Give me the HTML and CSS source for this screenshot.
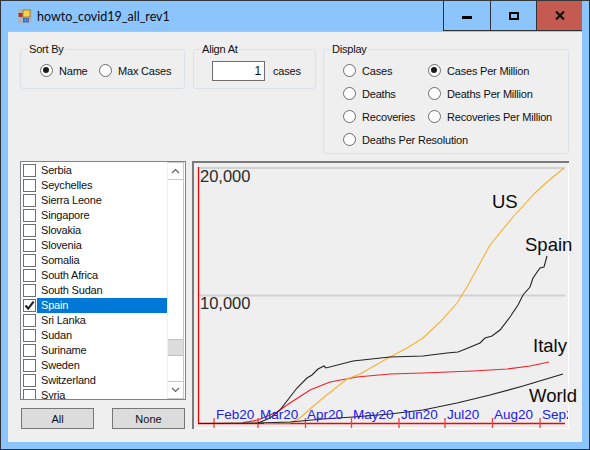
FILE: index.html
```html
<!DOCTYPE html>
<html lang="en">
<head>
<meta charset="utf-8">
<title>howto_covid19_all_rev1</title>
<link rel="stylesheet" href="styles.css">
</head>
<body>
<div class="window">
  <header class="titlebar">
    <svg class="app-icon" viewBox="0 0 14 14" width="14" height="14">
      <rect x="0" y="0" width="14" height="14" fill="#a9b4c4"/>
      <rect x="5" y="1" width="7" height="7" fill="#f8d24a" stroke="#a8802a"/>
      <rect x="1" y="4.5" width="3" height="3" fill="#e02a20" stroke="#8a2018" stroke-width=".7"/>
      <rect x="5.5" y="9.5" width="5" height="3.5" fill="#4a86e0" stroke="#2c5aa8" stroke-width=".7"/>
    </svg>
    <span class="title">howto_covid19_all_rev1</span>
    <div class="caption-buttons">
      <div class="cap cap-min"><span class="min-glyph"></span></div>
      <div class="cap cap-max"><span class="max-glyph"></span></div>
      <div class="cap cap-close">
        <svg viewBox="0 0 10 9" width="10" height="9"><path d="M1 .5 9 8.5M9 .5 1 8.5" stroke="#111" stroke-width="2.2" fill="none"/></svg>
      </div>
    </div>
  </header>
  <main class="client">
    <div class="top-row">
      <fieldset class="group group-sort">
        <legend>Sort By</legend>
        <div class="radio-row">
          <label class="radio radio-name"><span class="dot on"></span>Name</label>
          <label class="radio"><span class="dot"></span>Max Cases</label>
        </div>
      </fieldset>
      <fieldset class="group group-align">
        <legend>Align At</legend>
        <div class="align-row">
          <span class="num-input">1</span>
          <span>cases</span>
        </div>
      </fieldset>
      <fieldset class="group group-display">
        <legend>Display</legend>
        <div class="display-grid">
          <label class="radio"><span class="dot"></span>Cases</label>
          <label class="radio"><span class="dot on"></span>Cases Per Million</label>
          <label class="radio"><span class="dot"></span>Deaths</label>
          <label class="radio"><span class="dot"></span>Deaths Per Million</label>
          <label class="radio"><span class="dot"></span>Recoveries</label>
          <label class="radio"><span class="dot"></span>Recoveries Per Million</label>
          <label class="radio"><span class="dot"></span>Deaths Per Resolution</label>
        </div>
      </fieldset>
    </div>
    <div class="bottom-row">
      <div class="left-col">
        <div class="listbox">
          <ul class="items">
            <li class="item"><span class="check"></span>Serbia</li>
            <li class="item"><span class="check"></span>Seychelles</li>
            <li class="item"><span class="check"></span>Sierra Leone</li>
            <li class="item"><span class="check"></span>Singapore</li>
            <li class="item"><span class="check"></span>Slovakia</li>
            <li class="item"><span class="check"></span>Slovenia</li>
            <li class="item"><span class="check"></span>Somalia</li>
            <li class="item"><span class="check"></span>South Africa</li>
            <li class="item"><span class="check"></span>South Sudan</li>
            <li class="item selected"><span class="check"><svg viewBox="0 0 11 11" width="11" height="11"><path d="M1.5 5.500 4.200 8.600 9.600 1.600" fill="none" stroke="#222" stroke-width="2.2"/></svg></span><span class="item-text">Spain</span></li>
            <li class="item"><span class="check"></span>Sri Lanka</li>
            <li class="item"><span class="check"></span>Sudan</li>
            <li class="item"><span class="check"></span>Suriname</li>
            <li class="item"><span class="check"></span>Sweden</li>
            <li class="item"><span class="check"></span>Switzerland</li>
            <li class="item"><span class="check"></span>Syria</li>
          </ul>
          <div class="scrollbar">
            <div class="sb-btn"><svg viewBox="0 0 9 6" width="9" height="6"><path d="M1 5 4.500 1.500 8 5" fill="none" stroke="#606060" stroke-width="1.2"/></svg></div>
            <div class="sb-track"><div class="sb-thumb"></div></div>
            <div class="sb-btn"><svg viewBox="0 0 9 6" width="9" height="6"><path d="M1 1 4.500 4.500 8 1" fill="none" stroke="#606060" stroke-width="1.2"/></svg></div>
          </div>
        </div>
        <div class="buttons">
          <button class="btn" type="button">All</button>
          <button class="btn" type="button">None</button>
        </div>
      </div>
      <div class="plot">
        <svg class="chart" viewBox="192 161 377 268" width="377" height="268">
          <defs><clipPath id="plotclip"><rect x="192" y="161" width="376" height="268"/></clipPath></defs>
          <line class="grid" x1="198" y1="168" x2="565" y2="168"/>
          <line class="grid" x1="198" y1="295.5" x2="565" y2="295.5"/>
          <path class="axis" d="M198.500 167V423.500H565"/>
          <path class="ticks" d="M214 418V428M258 418V428M305.500 418V428M351.500 418V428M399 418V428M445 418V428M492.500 418V428M540 418V428"/>
          <polyline class="c-red" points="243,422.500 258,420 277,412 290,403 310,390 330,382 357,377 390,374 423,373 473,371 507,369 530,366 549,362"/>
          <polyline class="c-orange" points="264,423.500 278,423 290,423 300,418 310,409 323,398 337,387 347,379 360,374 390,357 407,348 423,338 440,322 457,303 467,287 490,245 513,217 535,193 547,182 564,168"/>
          <polyline class="c-black" points="198,423.500 258,423 270,418 280,410 290,397 297,388 307,378 312,375 318,369 324,366 326,368 353,361 390,357 423,356 447,353 458,352 468,348 480,343 485,338 492,336 500,330 510,317 518,305 523,295 530,287 533,278 540,268 544,267 547,256"/>
          <polyline class="c-world" points="258,423 290,422 323,419 353,417 390,414 423,410 457,403 490,395 523,386 563,374"/>
          <text class="val" x="200" y="181.500">20,000</text>
          <text class="val" x="200" y="309">10,000</text>
          <g clip-path="url(#plotclip)">
            <text class="mon" x="216" y="418.500">Feb20</text>
            <text class="mon" x="260" y="418.500">Mar20</text>
            <text class="mon" x="307" y="418.500">Apr20</text>
            <text class="mon" x="353" y="418.500">May20</text>
            <text class="mon" x="401" y="418.500">Jun20</text>
            <text class="mon" x="447" y="418.500">Jul20</text>
            <text class="mon" x="494" y="418.500">Aug20</text>
            <text class="mon" x="542" y="418.500">Sep20</text>
          </g>
          <text class="name" x="492" y="208">US</text>
          <text class="name" x="525" y="251">Spain</text>
          <text class="name" x="533" y="352">Italy</text>
          <text class="name" x="529" y="402">World</text>
        </svg>
      </div>
    </div>
  </main>
</div>
</body>
</html>
```
FILE: styles.css
```css
* { box-sizing: border-box; }
html, body { margin: 0; padding: 0; }
body {
  width: 590px;
  height: 450px;
  overflow: hidden;
  font-family: "Liberation Sans", Arial, sans-serif;
  font-size: 11px;
  letter-spacing: -0.2px;
  color: #101010;
}
.window {
  width: 590px;
  height: 450px;
  background: #8cc5fb;
  border: 1px solid #2e3236;
  border-top-color: #33383d;
  display: flex;
  flex-direction: column;
}
.titlebar {
  height: 30px;
  display: flex;
  align-items: center;
  flex: none;
  padding-left: 17px;
}
.app-icon { flex: none; margin-right: 5px; }
.title { font-family: Lato, sans-serif; font-size: 12.5px; letter-spacing: 0; color: #0a0a14; }
.caption-buttons {
  margin-left: auto;
  margin-right: 7px;
  display: flex;
  align-self: stretch;
  height: 30px;
}
.cap {
  width: 47px;
  display: flex;
  align-items: center;
  justify-content: center;
  border-left: 1px solid #2e3236;
  border-bottom: 1px solid #2e3236;
}
.cap-max { width: 46px; }
.cap-close { width: 46px; background: #c55a50; }
.min-glyph { width: 10px; height: 3px; background: #000; margin-top: 3px; }
.max-glyph { width: 10px; height: 8px; border: 2px solid #000; }
.client {
  margin: 0 7px;
  height: 411px;
  background: #efefef;
  padding: 10px 0 0 12px;
  border-top: 1px solid #a8c6e2;
}
.top-row { display: flex; height: 112px; align-items: flex-start; }
.group {
  margin: 0;
  padding: 0;
  border: 1px solid #dce1e8;
  border-radius: 3px;
  flex: none;
}
.group legend {
  margin-left: 7px;
  padding: 0 1px;
  font-size: 11px;
  line-height: 14px;
  height: 14px;
}
.group-sort { width: 165px; height: 47px; margin-right: 8px; }
.group-align { width: 123px; height: 47px; margin-right: 7px; }
.group-display { width: 246px; height: 112px; }
.radio-row { display: flex; padding: 3px 0 0 19px; }
.radio { display: flex; align-items: center; height: 23px; white-space: nowrap; }
.radio-name { width: 59px; }
.dot {
  width: 13px;
  height: 13px;
  border: 1.5px solid #6c6c6c;
  border-radius: 50%;
  background: #fff;
  margin-right: 6px;
  flex: none;
  position: relative;
}
.dot.on::after {
  content: "";
  position: absolute;
  left: 2px;
  top: 2px;
  width: 6px;
  height: 6px;
  border-radius: 50%;
  background: #1a1a1a;
}
.align-row { display: flex; align-items: center; padding: 3px 0 0 18px; gap: 8px; height: 26px; }
.num-input {
  width: 53px;
  height: 20px;
  border: 1px solid #6f6f6f;
  background: #fff;
  text-align: right;
  padding-right: 3px;
  line-height: 18px;
  font-size: 12px;
}
.display-grid {
  display: grid;
  grid-template-columns: 85px 1fr;
  grid-auto-rows: 23px;
  padding: 3px 0 0 19px;
}
.bottom-row { display: flex; margin-top: 7px; }
.left-col { width: 166px; margin-right: 6px; flex: none; }
.listbox {
  height: 239px;
  border: 1px solid #7e8389;
  background: #fff;
  display: flex;
  overflow: hidden;
}
.items { list-style: none; margin: 0; padding: 1px 0 0 0; width: 146px; flex: none; height: 237px; overflow: hidden; }
.item { height: 15px; display: flex; align-items: center; padding-left: 2px; line-height: 15px; white-space: nowrap; }
.check {
  width: 13px;
  height: 13px;
  border: 1px solid #6f6f6f;
  background: #fff;
  margin-right: 5px;
  flex: none;
  display: flex;
  align-items: center;
  justify-content: center;
}
.selected .check { margin-right: 1px; }
.item-text { background: #0078d7; color: #fff; flex: 1; height: 15px; padding-left: 4px; }
.scrollbar {
  width: 17px;
  flex: none;
  display: flex;
  flex-direction: column;
  border: 1px solid #c8c8c8;
  border-left-color: #f0f0f0;
  background: #fff;
}
.sb-btn { height: 16px; flex: none; display: flex; align-items: center; justify-content: center; }
.sb-track {
  flex: 1;
  border-top: 1px solid #c8c8c8;
  border-bottom: 1px solid #c8c8c8;
  padding-top: 159px;
}
.sb-thumb { height: 17px; background: #dcdcdc; border-top: 1px solid #c0c0c0; border-bottom: 1px solid #c0c0c0; }
.buttons { display: flex; justify-content: space-between; margin-top: 8px; padding: 0 1px; }
.btn {
  width: 73px;
  height: 21px;
  background: #dcdcdc;
  border: 1px solid #777;
  font: 11px "Liberation Sans", Arial, sans-serif;
  color: #101010;
  padding: 0;
}
.plot {
  width: 377px;
  height: 268px;
  flex: none;
  box-shadow: inset 2px 2px 0 #7a7a7a, inset -1px -1px 0 #fff;
}
.chart { display: block; overflow: visible; }
.chart polyline, .chart .ticks, .chart .axis { fill: none; }
.chart text { letter-spacing: 0; }
.grid { stroke: #d2d2d2; stroke-width: 2; }
.axis { stroke: #ff0000; stroke-width: 1.3; }
.ticks { stroke: #f04040; stroke-width: 1.3; }
.c-red { stroke: #f0222a; stroke-width: 1.2; }
.c-orange { stroke: #f8b030; stroke-width: 1.1; }
.c-black { stroke: #222; stroke-width: 1.1; }
.c-world { stroke: #222; stroke-width: 1.2; }
.val { font-size: 16.500px; fill: #2a2a2a; }
.mon { font-size: 13.500px; fill: #2020f0; }
.name { font-size: 18.500px; fill: #0a0a0a; }
```
